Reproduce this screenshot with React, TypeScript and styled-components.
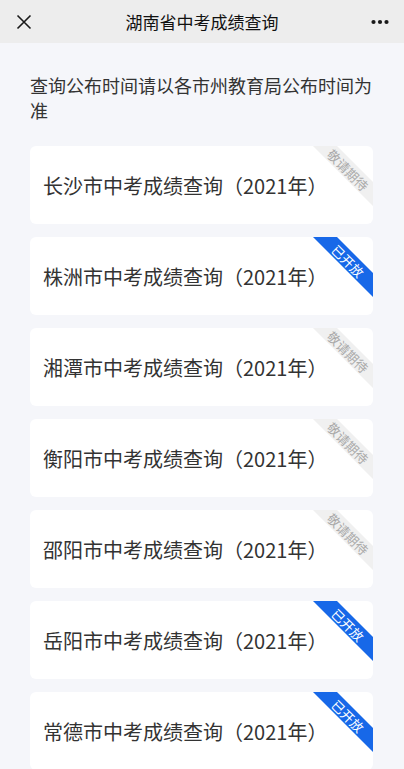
import React from 'react';
import styled, { createGlobalStyle } from 'styled-components';

type Status = 'open' | 'waiting';

type City = {
  name: string;
  status: Status;
}

const cities: City[] = [
  { name: '长沙市', status: 'waiting' },
  { name: '株洲市', status: 'open' },
  { name: '湘潭市', status: 'waiting' },
  { name: '衡阳市', status: 'waiting' },
  { name: '邵阳市', status: 'waiting' },
  { name: '岳阳市', status: 'open' },
  { name: '常德市', status: 'open' },
]

const App: React.FC = () => {
  return (
    <Page>
      <GlobalStyle />
      <Header>
        <HeaderButton aria-label="close">
          <svg width="16" height="16" viewBox="0 0 16 16">
            <path d="M1.5 1.5 L14.5 14.5 M14.5 1.5 L1.5 14.5" stroke="#1a1a1a" strokeWidth="1.6" fill="none" />
          </svg>
        </HeaderButton>
        <Title>湖南省中考成绩查询</Title>
        <HeaderButton aria-label="more">
          <svg width="18" height="6" viewBox="0 0 18 6">
            <circle cx="2.5" cy="3" r="2.1" fill="#1a1a1a" />
            <circle cx="9" cy="3" r="2.1" fill="#1a1a1a" />
            <circle cx="15.5" cy="3" r="2.1" fill="#1a1a1a" />
          </svg>
        </HeaderButton>
      </Header>
      <Content>
        <Notice>查询公布时间请以各市州教育局公布时间为准</Notice>
        <List>
          {cities.map((city) => (
            <Card key={city.name}>
              <CardText>{city.name}中考成绩查询（2021年）</CardText>
              <Ribbon status={city.status} />
              <RibbonLabel status={city.status}>
                {city.status === 'open' ? '已开放' : '敬请期待'}
              </RibbonLabel>
            </Card>
          ))}
        </List>
      </Content>
    </Page>
  );
}

const GlobalStyle = createGlobalStyle`
  html, body {
    margin: 0;
    padding: 0;
    background: #f5f6fa;
    overflow: hidden;
  }
  body {
    font-family: "Noto Sans CJK SC", "Noto Sans", sans-serif;
  }
`

const Page = styled.div`
  width: 404px;
  height: 769px;
  overflow: hidden;
  background: #f5f6fa;
`

const Header = styled.div`
  height: 43px;
  background: #ededed;
  display: flex;
  align-items: center;
  justify-content: space-between;
  padding: 0 12px 0 12px;
`

const HeaderButton = styled.div`
  width: 24px;
  height: 24px;
  display: flex;
  align-items: center;
  justify-content: center;
`

const Title = styled.div`
  font-size: 17px;
  color: #111;
`

const Content = styled.div`
  padding: 30px 30px 0 30px;
`

const Notice = styled.p`
  margin: 0;
  font-size: 18px;
  line-height: 25px;
  color: #333;
  width: 344px;
`

const List = styled.div`
  margin-top: 23px;
  display: flex;
  flex-direction: column;
  gap: 13px;
`

const Card = styled.div`
  position: relative;
  width: 343px;
  height: 78px;
  background: #ffffff;
  border-radius: 6px;
  overflow: hidden;
  display: flex;
  align-items: center;
  padding-left: 13px;
  box-sizing: border-box;
`

const CardText = styled.span`
  font-size: 20px;
  color: #333;
`

// corner band, clipped by the card
const Ribbon = styled.div<{ status: Status }>`
  position: absolute;
  top: 23px;
  right: 25px;
  width: 104px;
  height: 17px;
  transform: translate(50%, -50%) rotate(45deg);
  background: ${({ status }) => (status === 'open' ? '#1768e8' : '#f0f0f0')};
`

const RibbonLabel = styled.span<{ status: Status }>`
  position: absolute;
  top: 24px;
  right: 25px;
  transform: translate(50%, -50%) rotate(45deg);
  white-space: nowrap;
  font-size: 13px;
  line-height: 13px;
  color: ${({ status }) => (status === 'open' ? '#ffffff' : '#aaaaaa')};
`

export default App;
